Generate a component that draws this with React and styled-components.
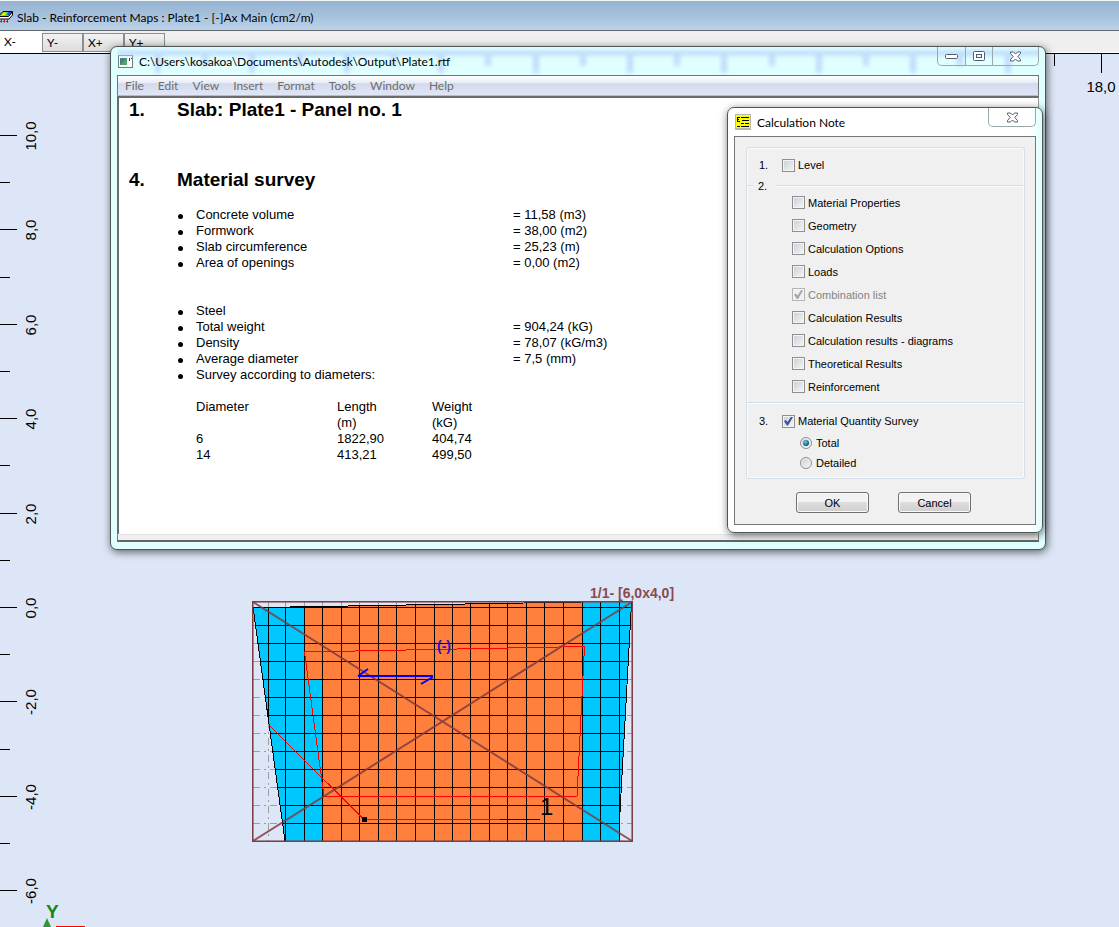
import React, { useState } from 'react';
import styled, { createGlobalStyle, css } from 'styled-components';

const GlobalStyle = createGlobalStyle`
  * {
    box-sizing: border-box;
  }

  body {
    margin: 0;
    background-color: #dde6f7;
    font-family: "Liberation Sans", Arial, sans-serif;
    color: #000;
  }
`;

const UI_FONT = 'Lato, "Open Sans", sans-serif';

const Desktop = styled.div`
  position: relative;
  display: flex;
  flex-direction: column;
  height: 100vh;
  overflow: hidden;
`;

const MainTitle = styled.header`
  display: flex;
  align-items: center;
  gap: 4px;
  flex: none;
  height: 31px;
  padding-top: 3px;
  border-top: 1px solid #f4f7fa;
  border-bottom: 1px solid #5f666c;
  background: linear-gradient(#94b2d1, #bad1e8);
  font-family: ${UI_FONT};
  font-size: 12px;
  white-space: nowrap;
`;

const Tabs = styled.nav`
  display: flex;
  align-items: flex-start;
  flex: none;
  height: 22px;
  background-color: #efefef;
  border-bottom: 1px solid #fff;
`;

const Tab = styled.button`
  width: 41px;
  height: 19px;
  margin-top: 2px;
  padding: 0 0 0 4px;
  border: 1px solid #8b8d93;
  background: linear-gradient(#f2f2f2, #dcdcdc);
  font-family: ${UI_FONT};
  font-size: 12px;
  line-height: 16px;
  text-align: left;

  ${({ $active }) => $active && css`
    width: 42px;
    height: 22px;
    margin-top: 0;
    border: none;
    background: #fff;
  `}
`;

const Canvas = styled.main`
  flex: 1;
  min-height: 0;
  border-top: 1px solid #000;
`;

const Drawing = styled.svg`
  display: block;
  width: 100%;
  height: 100%;
  font-family: "Liberation Sans", Arial, sans-serif;
`;

const Frame = styled.section`
  position: absolute;
  display: flex;
  flex-direction: column;
  border: 1px solid #4c5558;
  border-radius: 7px;
  box-shadow: 1px 2px 9px rgba(0, 0, 0, 0.6);
`;

const EditorFrame = styled(Frame)`
  top: 46px;
  left: 110px;
  width: 936px;
  padding: 0 6px 7px;
  background-color: #e0ffff;
`;

const NoteFrame = styled(Frame)`
  top: 107px;
  left: 727px;
  width: 316px;
  padding: 0 6px 7px;
  background: linear-gradient(90deg, #fff 96%, #e0ffff);
`;

const FrameTitle = styled.header`
  position: relative;
  display: flex;
  align-items: center;
  gap: 6px;
  height: 28px;
  padding-left: 1px;
  font-family: ${UI_FONT};
  font-size: 12px;
`;

const Glass = styled.svg`
  position: absolute;
  inset: 0;
  width: 100%;
  height: 100%;
`;

const Caption = styled.h2`
  position: relative;
  flex: 1;
  margin: 0;
  font-size: inherit;
  font-weight: 400;
`;

const WindowButtons = styled.div`
  position: relative;
  display: flex;
  align-self: flex-start;
  height: 19px;
  border: 1px solid #9aa7ad;
  border-top: none;
  border-radius: 0 0 5px 5px;
`;

const WindowButton = styled.button`
  display: flex;
  align-items: center;
  justify-content: center;
  width: ${({ $wide }) => ($wide ? 46 : 27)}px;
  padding: 0;
  border: none;
  background: none;

  & + & {
    border-left: 1px solid #9aa7ad;
  }
`;

const MenuBar = styled.nav`
  display: flex;
  gap: 14px;
  height: 21px;
  padding: 0 7px;
  border: 1px solid #6f7577;
  border-bottom-color: #b4bad0;
  background: linear-gradient(#fff, #e8ecf6 35%, #d3daee 40%, #e0e6f5);
`;

const MenuItem = styled.button`
  padding: 0;
  border: none;
  background: none;
  font-family: ${UI_FONT};
  font-size: 12px;
  line-height: 19px;
  color: #6d6d6d;
`;

const Page = styled.article`
  min-height: 438px;
  padding: 0 10px;
  border: 2px solid #6b6b6b;
  border-right: 1px solid #999;
  border-bottom: none;
  background-color: #fff;
  font-size: 13px;
  line-height: 16px;
`;

const StatusStrip = styled.div`
  height: 8px;
  border: 1px solid #777;
  border-top: 1px solid #e4e4e4;
  border-bottom: 2px solid #666;
  background-color: #efefef;
`;

const Heading = styled.h1`
  display: flex;
  margin: 0 0 ${({ $gap }) => $gap}px;
  font-size: 19px;
  line-height: 24px;
`;

const HeadingNumber = styled.span`
  width: 48px;
`;

const SurveyList = styled.ul`
  margin: 0 0 ${({ $gap }) => $gap}px 48px;
  padding: 0;
  list-style: none;
`;

const SurveyItem = styled.li`
  display: grid;
  grid-template-columns: 19px 317px auto;
  align-items: center;
  justify-content: start;

  &::before {
    content: "";
    width: 5px;
    height: 5px;
    margin: 2px 0 0 1px;
    border-radius: 50%;
    background-color: #000;
  }
`;

const DiameterTable = styled.table`
  margin-left: 67px;
  border-collapse: collapse;

  th,
  td {
    padding: 0;
    font-weight: 400;
    text-align: left;
    vertical-align: top;
  }

  th:nth-child(1) {
    width: 141px;
  }

  th:nth-child(2) {
    width: 95px;
  }
`;

const NoteBody = styled.form`
  padding: 10px 10px 11px 11px;
  border: 1px solid #777;
  background-color: #f0f0f0;
  font-size: 11px;
  line-height: 14px;
`;

const Groups = styled.div`
  border: 1px solid #d5dfe8;
  border-radius: 3px;
  box-shadow: inset 0 0 0 1px #fbfbfb;
`;

const Group = styled.div`
  display: grid;
  grid-template-columns: 23px auto;
  justify-content: start;
  padding: ${({ $pad }) => $pad};

  & + & {
    border-top: 1px solid #d5dfe8;
    box-shadow: inset 0 1px 0 #fbfbfb;
  }
`;

const GroupNumber = styled.span`
  align-self: start;
`;

const LegendNumber = styled(GroupNumber)`
  margin: -12px 7px 0 -6px;
  padding-left: 5px;
  background-color: #f0f0f0;
`;

const Options = styled.div`
  display: grid;
  grid-auto-rows: ${({ $row }) => $row}px;
  align-items: center;
  padding-top: ${({ $top }) => $top || 0}px;
  padding-left: ${({ $indent }) => $indent}px;
`;

const Option = styled.label`
  display: flex;
  align-items: center;
  gap: ${({ $gap }) => $gap || 3}px;
  color: ${({ $disabled }) => ($disabled ? '#838383' : '#000')};
`;

const Box = styled.input`
  appearance: none;
  display: grid;
  place-items: center;
  width: 13px;
  height: 13px;
  margin: 0;
  border: 1px solid #8e8f8f;
  background: linear-gradient(135deg, #c9ced6, #f6f6f6);
  box-shadow: inset 0 0 0 1px #f4f4f4;

  &:checked::before {
    content: "";
    width: 9px;
    height: 9px;
    background-color: #3c529c;
    clip-path: polygon(0 50%, 20% 38%, 40% 62%, 80% 0, 100% 5%, 45% 100%, 32% 100%);
  }

  &:disabled {
    border-color: #b5b5b5;
    background: #f0f0f0;
  }

  &:disabled::before {
    background-color: #a5a5a5;
  }
`;

const Radio = styled(Box)`
  width: 12px;
  height: 12px;
  border-radius: 50%;

  &:checked::before {
    width: 6px;
    height: 6px;
    border-radius: 50%;
    background: radial-gradient(circle at 40% 35%, #5fd0f5, #10436b 75%);
    clip-path: none;
  }
`;

const Actions = styled.div`
  display: flex;
  gap: 29px;
  margin-top: 13px;
  padding-left: 50px;
`;

const ActionButton = styled.button`
  width: 73px;
  height: 21px;
  padding: 0;
  border: 1px solid #707070;
  border-radius: 3px;
  background: linear-gradient(#f2f2f2 45%, #dddddd 50%, #cfcfcf);
  box-shadow: inset 0 0 0 1px #fafafa;
  font-family: inherit;
  font-size: 11px;
`;

const SLAB = '253,607 290,607 582,602 632,602 631,612 619,830 619,841 285,841';
const GRID_X = [268, 285, 304, 322, 341, 359, 378, 396, 415, 434, 452, 470, 489, 507, 526, 544, 563, 582, 600, 619];
const GRID_Y = Array.from({ length: 13 }, (_, i) => 607 + i * 18);
const RULER_Y = Array.from({ length: 17 }, (_, i) => ({
  y: Math.round(135 + i * 47.2),
  label: i % 2 === 0 ? `${10 - i},0` : null,
}));
const TOP_TICKS = Array.from({ length: 21 }, (_, i) => Math.round(157 + i * 47.2));

const gridPath = [
  ...GRID_X.map((x) => `M${x + 0.5} 602V841`),
  ...GRID_Y.map((y) => `M253 ${y + 0.5}H632`),
].join('');

function SlabIcon() {
  return (
    <svg width="13" height="14" viewBox="0 0 13 14">
      <path d="M-2 6.500 3 1.500H12.500L8.500 6.500Z" fill="#3fd45a" stroke="#000" />
      <path d="M3.500 2.500H7L4.500 5.500H1Z" fill="#ffe600" />
      <path d="M8 2H11.500L9.500 5H7Z" fill="#1b58e0" />
      <path d="M-1 6.500H8.500L12.500 2V5L9 9H-1Z" fill="#fff" stroke="#000" />
      <path d="M1.500 9.500V13M4.500 9.500V13M7.500 9.500V13M0 11.500H9" stroke="#e00000" strokeDasharray="2 1" />
    </svg>
  );
}

function EditorIcon() {
  return (
    <svg width="15" height="13" viewBox="0 0 15 13">
      <rect x="0.500" y="0.500" width="14" height="12" fill="#fff" stroke="#75797c" />
      <rect x="2" y="3" width="7" height="7" fill="#3e7f86" />
      <path d="M2 10 9 3V10Z" fill="#59a06c" />
      <path d="M11.500 3V6M13.500 3V4" stroke="#333" />
    </svg>
  );
}

function NoteIcon() {
  return (
    <svg width="16" height="16" viewBox="0 0 16 16">
      <rect width="16" height="16" fill="#b8b8a8" />
      <rect x="1" y="1" width="14" height="13" fill="#ffff00" />
      <path d="M2 3.500H5M2 5.500H4M2 7.500H5M2.500 3V8M6 3.500H14M7 6.500H14M6 9.500H9M10 9.500H14M2 12.500H5M6 12.500H14" stroke="#000" />
    </svg>
  );
}

function CloseGlyph() {
  return (
    <svg width="13" height="11" viewBox="0 0 13 11">
      <path
        d="M1.500 1H4.500L6.500 3 8.500 1H11.500V2.500L8.800 5.500 11.500 8.500V10H8.500L6.500 8 4.500 10H1.500V8.500L4.200 5.500 1.500 2.500Z"
        fill="#fff"
        stroke="#555a6c"
      />
    </svg>
  );
}

function SlabDrawing() {
  return (
    <Drawing>
      <defs>
        <clipPath id="slab">
          <polygon points={SLAB} />
        </clipPath>
      </defs>
      {/* plan coordinates start at the top of the application window */}
      <g transform="translate(0 -54)" fill="none">
        <g stroke="#000">
          {TOP_TICKS.map((x, i) => (
            <path key={x} d={`M${x + 0.5} 54V${i % 2 ? 66 : 73}`} />
          ))}
          {RULER_Y.map(({ y, label }) => (
            <path key={y} d={`M0 ${y + 0.5}H${label ? 17 : 10}`} />
          ))}
        </g>
        <g fill="#000" fontSize="15" textAnchor="middle">
          <text x="1101" y="92">18,0</text>
          {RULER_Y.filter(({ label }) => label).map(({ y, label }) => (
            <text key={y} transform={`translate(36 ${y + 1}) rotate(-90)`}>{label}</text>
          ))}
        </g>

        <path d={gridPath} stroke="#9d9d9d" strokeDasharray="7 4 2 4" />
        <g clipPath="url(#slab)" shapeRendering="crispEdges">
          <rect x="253" y="602" width="380" height="240" fill="#00c8ff" />
          <path d="M304 602H582V841H322V680H304Z" fill="#ff803c" />
          <path d={gridPath} stroke="#000" />
        </g>
        <polygon points={SLAB} stroke="#000" shapeRendering="crispEdges" />

        <g stroke="#ff0000" shapeRendering="crispEdges">
          <path d="M304.500 652 584.500 646.500 577 796.500H324Z" />
          <path d="M269 725 364 819.500H500" />
        </g>
        <path d="M500 819.500H540" stroke="#000" />
        <rect x="362" y="817" width="5" height="5" fill="#000" />

        <g stroke="#803c40">
          <path d="M253 602 632 841M253 841 632 602" strokeWidth="2" strokeOpacity="0.85" />
          <rect x="253.500" y="602.500" width="378" height="238" strokeOpacity="0.55" />
          <rect x="252.500" y="601.500" width="380" height="240" />
        </g>

        <path d="M358 676H433M358 676 368 669M433 677 421 684" stroke="#0000ff" strokeWidth="2" />
        <text x="437" y="651" fontSize="14" fontWeight="700" fill="#2a10c8">(-)</text>
        <text x="540" y="815" fontSize="24" fill="#000">1</text>
        <text x="590" y="598" fontSize="14" fontWeight="700" fill="#8a4a50">1/1- [6,0x4,0]</text>

        <text x="46" y="918" fontSize="19" fontWeight="700" fill="#128a12">Y</text>
        <path d="M47 918 51 927H43Z" fill="#2e9440" />
        <path d="M56 926.500H85" stroke="#ff0000" />
      </g>
    </Drawing>
  );
}

const QUANTITIES = [
  ['Concrete volume', '= 11,58 (m3)'],
  ['Formwork', '= 38,00 (m2)'],
  ['Slab circumference', '= 25,23 (m)'],
  ['Area of openings', '= 0,00 (m2)'],
];

const STEEL = [
  ['Steel'],
  ['Total weight', '= 904,24 (kG)'],
  ['Density', '= 78,07 (kG/m3)'],
  ['Average diameter', '= 7,5 (mm)'],
  ['Survey according to diameters:'],
];

function Survey({ items, gap }) {
  return (
    <SurveyList $gap={gap}>
      {items.map(([name, value]) => (
        <SurveyItem key={name}>
          <span>{name}</span>
          {value && <span>{value}</span>}
        </SurveyItem>
      ))}
    </SurveyList>
  );
}

function EditorWindow() {
  return (
    <EditorFrame>
      <FrameTitle>
        <Glass>
          <defs>
            <filter id="glass" x="-5%" y="-50%" width="110%" height="200%">
              <feGaussianBlur stdDeviation="2" />
            </filter>
          </defs>
          <g filter="url(#glass)" stroke="#bfdcfc" fill="none">
            <path d="M0 6H930" strokeWidth="5" />
            {TOP_TICKS.map((x, i) => (
              <path key={x} d={`M${x - 116} 7V${i % 2 ? 19 : 26}`} strokeWidth="6" />
            ))}
          </g>
        </Glass>
        <EditorIcon />
        <Caption>C:\Users\kosakoa\Documents\Autodesk\Output\Plate1.rtf</Caption>
        <WindowButtons>
          <WindowButton aria-label="Minimize">
            <svg width="13" height="5" viewBox="0 0 13 5">
              <rect x="0.500" y="0.500" width="12" height="4" rx="1" fill="#fff" stroke="#555a6c" />
            </svg>
          </WindowButton>
          <WindowButton aria-label="Maximize">
            <svg width="12" height="10" viewBox="0 0 12 10">
              <rect x="0.500" y="0.500" width="11" height="9" rx="1" fill="#fff" stroke="#555a6c" />
              <rect x="3.500" y="3.500" width="5" height="3" fill="#dff" stroke="#555a6c" />
            </svg>
          </WindowButton>
          <WindowButton $wide aria-label="Close"><CloseGlyph /></WindowButton>
        </WindowButtons>
      </FrameTitle>
      <MenuBar>
        {['File', 'Edit', 'View', 'Insert', 'Format', 'Tools', 'Window', 'Help'].map((item) => (
          <MenuItem key={item}>{item}</MenuItem>
        ))}
      </MenuBar>
      <Page>
        <Heading $gap={46}><HeadingNumber>1.</HeadingNumber>Slab: Plate1 - Panel no. 1</Heading>
        <Heading $gap={15}><HeadingNumber>4.</HeadingNumber>Material survey</Heading>
        <Survey items={QUANTITIES} gap={32} />
        <Survey items={STEEL} gap={16} />
        <DiameterTable>
          <thead>
            <tr>
              <th>Diameter</th>
              <th>Length<br />(m)</th>
              <th>Weight<br />(kG)</th>
            </tr>
          </thead>
          <tbody>
            <tr><td>6</td><td>1822,90</td><td>404,74</td></tr>
            <tr><td>14</td><td>413,21</td><td>499,50</td></tr>
          </tbody>
        </DiameterTable>
      </Page>
      <StatusStrip />
    </EditorFrame>
  );
}

const SECTIONS = [
  'Material Properties',
  'Geometry',
  'Calculation Options',
  'Loads',
  'Combination list',
  'Calculation Results',
  'Calculation results - diagrams',
  'Theoretical Results',
  'Reinforcement',
];

function CalculationNote() {
  const [mode, setMode] = useState('Total');

  return (
    <NoteFrame>
      <FrameTitle>
        <NoteIcon />
        <Caption>Calculation Note</Caption>
        <WindowButtons>
          <WindowButton $wide aria-label="Close"><CloseGlyph /></WindowButton>
        </WindowButtons>
      </FrameTitle>
      <NoteBody onSubmit={(e) => e.preventDefault()}>
        <Groups>
          <Group $pad="10px 12px 13px">
            <GroupNumber>1.</GroupNumber>
            <Option><Box type="checkbox" />Level</Option>
          </Group>
          <Group $pad="5px 12px 4px">
            <LegendNumber>2.</LegendNumber>
            <Options $row={23} $indent={10}>
              {SECTIONS.map((name) => (
                <Option key={name} $disabled={name === 'Combination list'}>
                  <Box
                    type="checkbox"
                    defaultChecked={name === 'Combination list'}
                    disabled={name === 'Combination list'}
                  />
                  {name}
                </Option>
              ))}
            </Options>
          </Group>
          <Group $pad="11px 12px 5px">
            <GroupNumber>3.</GroupNumber>
            <div>
              <Option><Box type="checkbox" defaultChecked />Material Quantity Survey</Option>
              <Options $row={20} $top={5} $indent={18}>
                {['Total', 'Detailed'].map((name) => (
                  <Option key={name} $gap={4}>
                    <Radio type="radio" name="survey" checked={mode === name} onChange={() => setMode(name)} />
                    {name}
                  </Option>
                ))}
              </Options>
            </div>
          </Group>
        </Groups>
        <Actions>
          <ActionButton type="submit">OK</ActionButton>
          <ActionButton type="button">Cancel</ActionButton>
        </Actions>
      </NoteBody>
    </NoteFrame>
  );
}

function App() {
  return (
    <Desktop>
      <GlobalStyle />
      <MainTitle>
        <SlabIcon />
        Slab - Reinforcement Maps : Plate1 - [-]Ax Main (cm2/m)
      </MainTitle>
      <Tabs>
        <Tab $active>X-</Tab>
        <Tab>Y-</Tab>
        <Tab>X+</Tab>
        <Tab>Y+</Tab>
      </Tabs>
      <Canvas>
        <SlabDrawing />
      </Canvas>
      <EditorWindow />
      <CalculationNote />
    </Desktop>
  );
}

export default App;
